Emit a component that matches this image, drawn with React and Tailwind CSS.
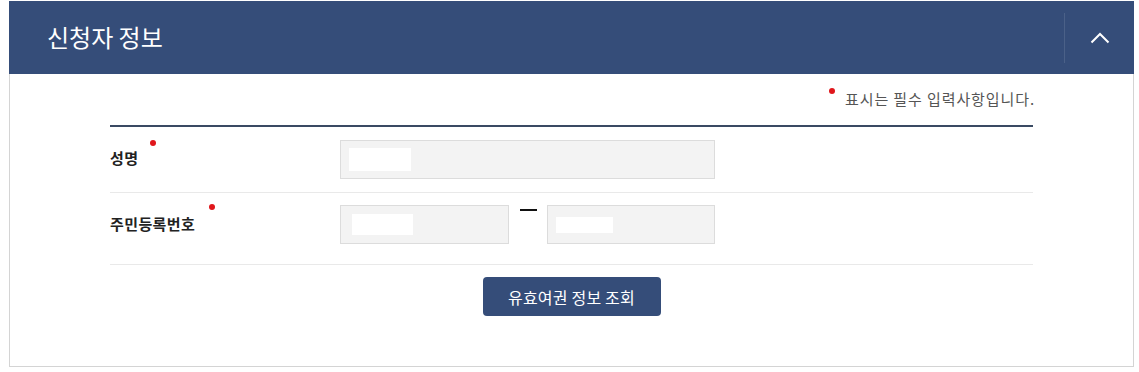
import React from "react";

function RequiredDot({ className }) {
  return <span className={"absolute w-[6px] h-[6px] rounded-full bg-[#e0161b] " + className}></span>;
}

export default function App() {
  return (
    <div className="w-[1139px] h-[372px] bg-white pt-[1px] pl-[9px] font-['Noto_Sans_CJK_KR',_'Noto_Sans',_sans-serif]">
      <div className="w-[1125px] h-[366px] border-x border-b border-[#d4d4d4] flex flex-col">
        {/* header */}
        <div className="h-[73px] -mx-px bg-[#354d79] flex items-center">
          <h2 className="pl-[38px] text-[24px] text-white leading-none tracking-[0px] flex-1 -mt-[2px]">신청자 정보</h2>
          <div className="w-px h-[50px] bg-[#4b6188]"></div>
          <button className="w-[69px] h-full flex items-center justify-center">
            <svg width="20" height="12" viewBox="0 0 20 12" fill="none">
              <path d="M1.5 10.5 L10 2 L18.5 10.5" stroke="white" strokeWidth="2" />
            </svg>
          </button>
        </div>

        {/* body */}
        <div className="flex flex-col px-[100px]">
          <div className="h-[51px] flex justify-end items-start pt-[15px]">
            <div className="relative pl-[16px] text-[15px] text-[#555] tracking-[0.9px] leading-[20px] -mr-[2px]">
              <RequiredDot className="left-0 top-[-1px]" />
              표시는 필수 입력사항입니다.
            </div>
          </div>
          <div className="h-[2px] bg-[#3a4a63]"></div>

          {/* row 1 */}
          <div className="h-[66px] flex items-start pt-[13px] border-b border-[#e9e9e9]">
            <div className="w-[230px] h-[39px] flex items-center">
              <span className="text-[15px] font-bold text-[#222] tracking-[0.4px] relative -mt-[2px]">
                성명
                <RequiredDot className="left-[40px] top-[-7px]" />
              </span>
            </div>
            <div className="w-[375px] h-[39px] bg-[#f3f3f3] border border-[#dcdcdc] flex items-center pl-[8px]">
              <div className="w-[62px] h-[23px] bg-white"></div>
            </div>
          </div>

          {/* row 2 */}
          <div className="h-[72px] flex items-start pt-[12px] border-b border-[#e9e9e9]">
            <div className="w-[230px] h-[39px] flex items-center">
              <span className="text-[15px] font-bold text-[#222] tracking-[0.4px] relative">
                주민등록번호
                <RequiredDot className="left-[99px] top-[-9px]" />
              </span>
            </div>
            <div className="w-[169px] h-[39px] bg-[#f3f3f3] border border-[#dcdcdc] flex items-center pl-[11px]">
              <div className="w-[61px] h-[21px] bg-white"></div>
            </div>
            <div className="w-[38px] h-[39px] flex justify-center">
              <div className="w-[17px] h-[2px] bg-[#111] mt-[4px]"></div>
            </div>
            <div className="w-[168px] h-[39px] bg-[#f3f3f3] border border-[#dcdcdc] flex items-center pl-[8px]">
              <div className="w-[57px] h-[16px] bg-white"></div>
            </div>
          </div>

          <div className="flex justify-center pt-[12px]">
            <button className="w-[178px] h-[39px] bg-[#354d79] rounded-[4px] text-white text-[16px] tracking-[0.2px]">
              유효여권 정보 조회
            </button>
          </div>
        </div>
      </div>
    </div>
  );
}
